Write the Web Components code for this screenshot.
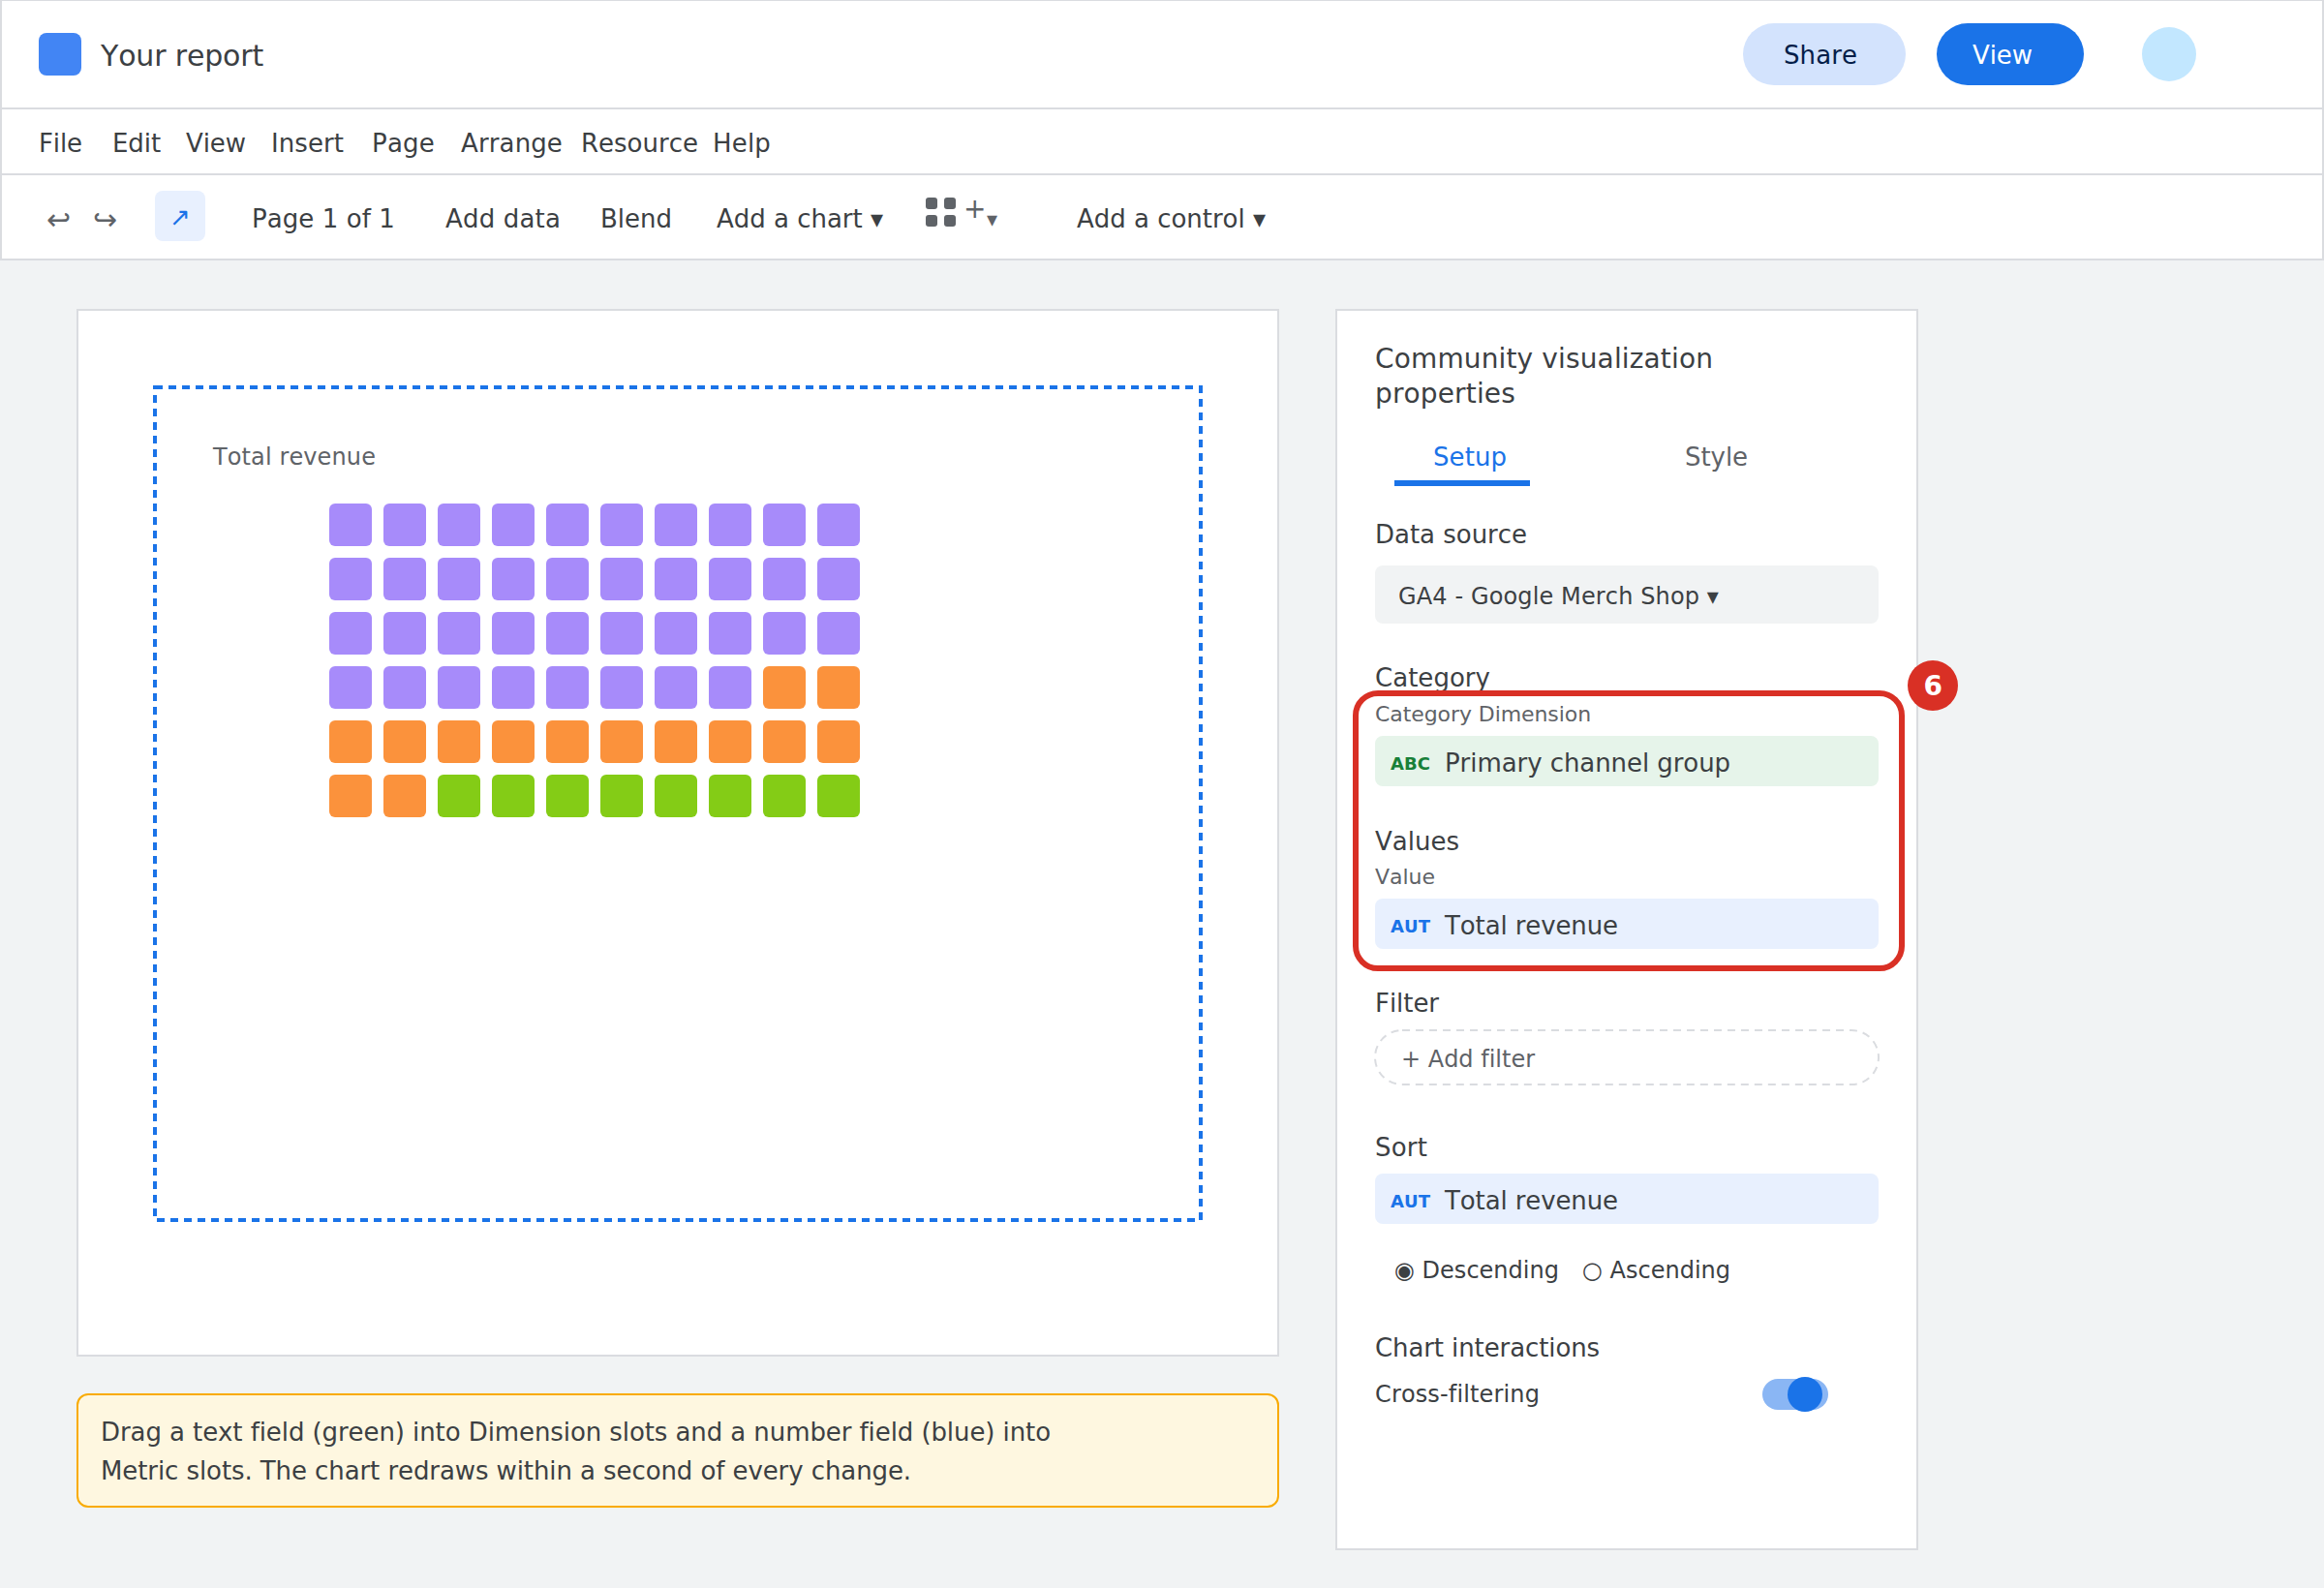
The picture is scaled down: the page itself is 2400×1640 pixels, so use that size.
<!DOCTYPE html>
<html lang="en">
<head>
<meta charset="utf-8">
<title>Your report</title>
<style>
  html, body { margin: 0; padding: 0; }
  body {
    width: 2400px; height: 1640px; overflow: hidden;
    background: #f1f3f4; color: #3c4043;
    font-family: "DejaVu Sans", sans-serif;
    font-kerning: none;
    display: flex; flex-direction: column;
  }
  .workspace { display: flex; align-items: flex-start; padding: 50px 0 0 79px; gap: 58px; }
  .stage { display: flex; flex-direction: column; gap: 38px; }
</style>
</head>
<body>
  <rs-app-bar></rs-app-bar>
  <rs-menu-bar></rs-menu-bar>
  <rs-tool-bar></rs-tool-bar>
  <div class="workspace">
    <div class="stage">
      <rs-canvas>
        <rs-waffle></rs-waffle>
      </rs-canvas>
      <rs-note><rs-line>Drag a text field (green) into Dimension slots and a number field (blue) into</rs-line><rs-line>Metric slots. The chart redraws within a second of every change.</rs-line></rs-note>
    </div>
    <rs-panel></rs-panel>
  </div>

<script>
// small helper, every element below is just a template in an open shadow root
function define(tag, html, extra) {
  const tpl = document.createElement('template');
  tpl.innerHTML = html;
  class El extends HTMLElement {
    constructor() {
      super();
      this.attachShadow({ mode: 'open' });
      this.shadowRoot.appendChild(tpl.content.cloneNode(true));
    }
    connectedCallback() {
      if (extra) extra(this);
    }
  }
  customElements.define(tag, El);
}

define('rs-line', `<style>:host { display: block; }</style><slot></slot>`);

define('rs-app-bar', `
  <style>
    :host {
      display: flex; align-items: center; box-sizing: border-box; height: 114px;
      margin-top: -1px; background: #fff; border: 2px solid #dadce0;
      padding: 0 130px 0 38px; flex: none;
    }
    .logo { width: 44px; height: 44px; border-radius: 8px; background: #4285f4; }
    .title { margin: 2px 0 0 20px; font-size: 30px; color: #3c4043; }
    .btn {
      box-sizing: border-box; height: 64px; border-radius: 32px; font-size: 26px;
      display: flex; align-items: center; padding-top: 2px;
    }
    .share { margin-left: auto; width: 168px; padding-left: 42px; background: #d3e3fd; color: #041e49; }
    .view { margin-left: 32px; width: 152px; padding-left: 37px; background: #1a73e8; color: #fff; }
    .avatar { margin-left: 60px; width: 56px; height: 56px; border-radius: 50%; background: #c2e7ff; }
  </style>
  <div class="logo"></div>
  <div class="title">Your report</div>
  <div class="btn share">Share</div>
  <div class="btn view">View</div>
  <div class="avatar"></div>
`);

define('rs-menu-bar', `
  <style>
    :host {
      display: grid; box-sizing: border-box; height: 68px; flex: none;
      grid-template-columns: 76px 76px 88px 104px 92px 124px 136px auto;
      align-items: center; background: #fff; font-size: 26px; color: #3c4043;
      border: 2px solid #dadce0; border-top: 0; padding: 4px 0 0 38px;
    }
  </style>
  <span>File</span><span>Edit</span><span>View</span><span>Insert</span><span>Page</span><span>Arrange</span><span>Resource</span><span>Help</span>
`);

define('rs-tool-bar', `
  <style>
    :host {
      display: grid; box-sizing: border-box; height: 88px; flex: none;
      grid-template-columns: 48px 64px 100px 200px 160px 120px 216px 156px auto;
      align-items: center; background: #fff; font-size: 26px; color: #3c4043;
      border: 2px solid #dadce0; border-top: 0; padding: 4px 0 0 46px;
    }
    .hist { font-size: 30px; color: #5f6368; }
    .pointer {
      width: 52px; height: 52px; margin-top: -6px; border-radius: 8px; background: #e8f0fe; color: #1a73e8;
      display: flex; align-items: center; justify-content: center; font-size: 26px; padding-top: 2px; box-sizing: border-box;
    }
    .addon { display: flex; align-self: start; margin-top: 19px; color: #5f6368; }
    .grid { display: grid; align-self: flex-start; grid-template-columns: 12px 12px; gap: 6px 7px; }
    .grid i { width: 12px; height: 12px; border-radius: 3px; background: #5f6368; }
    .plus { margin-left: 8px; font-size: 28px; line-height: 24px; }
    .caret { margin: 11px 0 0 1px; font-size: 22px; line-height: 24px; }
  </style>
  <span class="hist">↩</span>
  <span class="hist">↪</span>
  <div><div class="pointer">↗</div></div>
  <span>Page 1 of 1</span>
  <span>Add data</span>
  <span>Blend</span>
  <span>Add a chart ▾</span>
  <div class="addon">
    <div class="grid"><i></i><i></i><i></i><i></i></div>
    <span class="plus">+</span><span class="caret">▾</span>
  </div>
  <span>Add a control ▾</span>
`);

define('rs-canvas', `
  <style>
    :host {
      display: block; box-sizing: border-box; width: 1242px; height: 1082px;
      background: #fff; border: 2px solid #dadce0; padding: 79px 0 0 79px;
    }
    .frame { position: relative; width: 1080px; height: 860px; box-sizing: border-box; padding: 54px 0 0 60px; }
    svg { position: absolute; left: 0; top: 0; overflow: visible; }
    .caption { font-size: 24px; line-height: 36px; color: #5f6368; }
    .body { margin: 30px 0 0 120px; }
  </style>
  <div class="frame">
    <svg width="1080" height="860" fill="none"><rect width="1080" height="860" stroke="#1a73e8" stroke-width="4" stroke-dasharray="8 6"/></svg>
    <div class="caption">Total revenue</div>
    <div class="body"><slot></slot></div>
  </div>
`);

define('rs-waffle', `
  <style>
    :host { display: grid; grid-template-columns: repeat(10, 44px); grid-auto-rows: 44px; gap: 12px; }
    i { border-radius: 6px; }
  </style>
`, el => {
  const colours = [['#a78bfa', 38], ['#fb923c', 14], ['#84cc16', 8]];
  for (const [colour, count] of colours) {
    for (let n = 0; n < count; n++) {
      const cell = document.createElement('i');
      cell.style.background = colour;
      el.shadowRoot.appendChild(cell);
    }
  }
});

define('rs-note', `
  <style>
    :host {
      display: block; box-sizing: border-box; width: 1242px; height: 118px;
      background: #fef7e0; border: 2px solid #f9ab00; border-radius: 12px;
      padding: 18px 23px; font-size: 26px; line-height: 40px; color: #3c4043;
    }
  </style>
  <slot></slot>
`);

define('rs-label', `
  <style>
    :host { display: block; font-size: 26px; line-height: 36px; color: #3c4043; padding-top: 2px; margin-bottom: -2px; }
    :host([small]) { font-size: 22px; line-height: 30px; color: #5f6368; padding-top: 1px; margin-bottom: -1px; }
  </style>
  <slot></slot>
`);

define('rs-chip', `
  <style>
    :host {
      display: flex; align-items: center; box-sizing: border-box; height: 52px;
      border-radius: 8px; padding: 4px 0 0 16px; background: #e8f0fe; font-size: 26px; color: #3c4043;
    }
    :host([kind="dim"]) { background: #e6f4ea; }
    b { font-size: 18px; width: 56px; color: #1a73e8; flex: none; }
    :host([kind="dim"]) b { color: #188038; }
  </style>
  <b></b><slot></slot>
`, el => {
  el.shadowRoot.querySelector('b').textContent = el.getAttribute('tag');
});

define('rs-toggle', `
  <style>
    :host { display: block; position: relative; width: 68px; height: 32px; border-radius: 16px; background: #8ab6f4; }
    i { position: absolute; left: 26px; top: -2px; width: 36px; height: 36px; border-radius: 50%; background: #1a73e8; }
  </style>
  <i></i>
`);

define('rs-callout', `
  <style>
    :host {
      position: absolute; left: 16px; top: 392px; box-sizing: border-box;
      width: 570px; height: 290px; border: 6px solid #d93025; border-radius: 26px;
    }
    span {
      position: absolute; left: 567px; top: -37px; width: 52px; height: 52px; border-radius: 50%;
      background: #d93025; color: #fff; font-size: 28px; font-weight: 700;
      display: flex; align-items: center; justify-content: center;
    }
  </style>
  <span>6</span>
`);

define('rs-panel', `
  <style>
    :host {
      display: block; position: relative; box-sizing: border-box; width: 602px; height: 1282px;
      background: #fff; border: 2px solid #dadce0; padding: 32px 39px 0;
    }
    .title { width: 400px; font-size: 28px; line-height: 36px; color: #3c4043; }
    .tabs { display: flex; margin: 15px 0 0 20px; height: 62px; font-size: 26px; }
    .tab { box-sizing: border-box; width: 140px; height: 62px; padding: 15px 0 0 40px; line-height: 34px; color: #1a73e8; border-bottom: 6px solid #1a73e8; }
    .tab + .tab { margin-left: 160px; padding-left: 0; color: #5f6368; border-bottom: 0; }
    .select {
      margin-top: 16px; height: 60px; box-sizing: border-box; border-radius: 8px; background: #f1f3f4;
      padding-left: 24px; font-size: 24px; line-height: 64px; color: #3c4043;
    }
    .filter { position: relative; margin-top: 12px; height: 56px; padding-left: 27px; font-size: 24px; line-height: 60px; color: #5f6368; }
    .filter svg { position: absolute; left: 0; top: 0; overflow: visible; }
    .radios { margin: 33px 0 0 20px; display: flex; gap: 24px; font-size: 24px; line-height: 30px; color: #3c4043; }
    .row { margin-top: 16px; display: flex; align-items: center; justify-content: space-between; padding-right: 52px; font-size: 24px; height: 32px; color: #3c4043; }
  </style>
  <div class="title">Community visualization properties</div>
  <div class="tabs"><div class="tab">Setup</div><div class="tab">Style</div></div>
  <rs-label style="margin-top:30px">Data source</rs-label>
  <div class="select">GA4 - Google Merch Shop ▾</div>
  <rs-label style="margin-top:36px">Category</rs-label>
  <rs-label small style="margin-top:6px">Category Dimension</rs-label>
  <rs-chip kind="dim" tag="ABC" style="margin-top:8px">Primary channel group</rs-chip>
  <rs-label style="margin-top:37px">Values</rs-label>
  <rs-label small style="margin-top:5px">Value</rs-label>
  <rs-chip tag="AUT" style="margin-top:8px">Total revenue</rs-chip>
  <rs-label style="margin-top:36px">Filter</rs-label>
  <div class="filter">
    <svg width="520" height="56" fill="none"><rect width="520" height="56" rx="28" stroke="#dadce0" stroke-width="2" stroke-dasharray="8 6"/></svg>
    + Add filter
  </div>
  <rs-label style="margin-top:45px">Sort</rs-label>
  <rs-chip tag="AUT" style="margin-top:11px">Total revenue</rs-chip>
  <div class="radios"><span>◉ Descending</span><span>○ Ascending</span></div>
  <rs-label style="margin-top:45px">Chart interactions</rs-label>
  <div class="row"><span>Cross-filtering</span><rs-toggle></rs-toggle></div>
  <rs-callout></rs-callout>
`);

// the reference has whole-pixel glyph advances; spread each string by the difference
const ctx = document.createElement('canvas').getContext('2d');
function snapText(root) {
  for (const node of root.childNodes) {
    if (node.nodeType === Node.TEXT_NODE) {
      const text = node.textContent.trim();
      if (!text || node.parentNode.nodeType !== Node.ELEMENT_NODE) continue;
      const cs = getComputedStyle(node.parentNode);
      ctx.font = `${cs.fontWeight} ${cs.fontSize} "DejaVu Sans"`;
      let diff = 0;
      for (const ch of text) {
        const w = ctx.measureText(ch).width;
        diff += Math.round(w) - w;
      }
      node.parentNode.style.letterSpacing = (diff / text.length).toFixed(3) + 'px';
    } else if (node.nodeType === Node.ELEMENT_NODE && node.tagName !== 'STYLE') {
      if (node.shadowRoot) snapText(node.shadowRoot);
      snapText(node);
    }
  }
}
snapText(document.body);
</script>
</body>
</html>
